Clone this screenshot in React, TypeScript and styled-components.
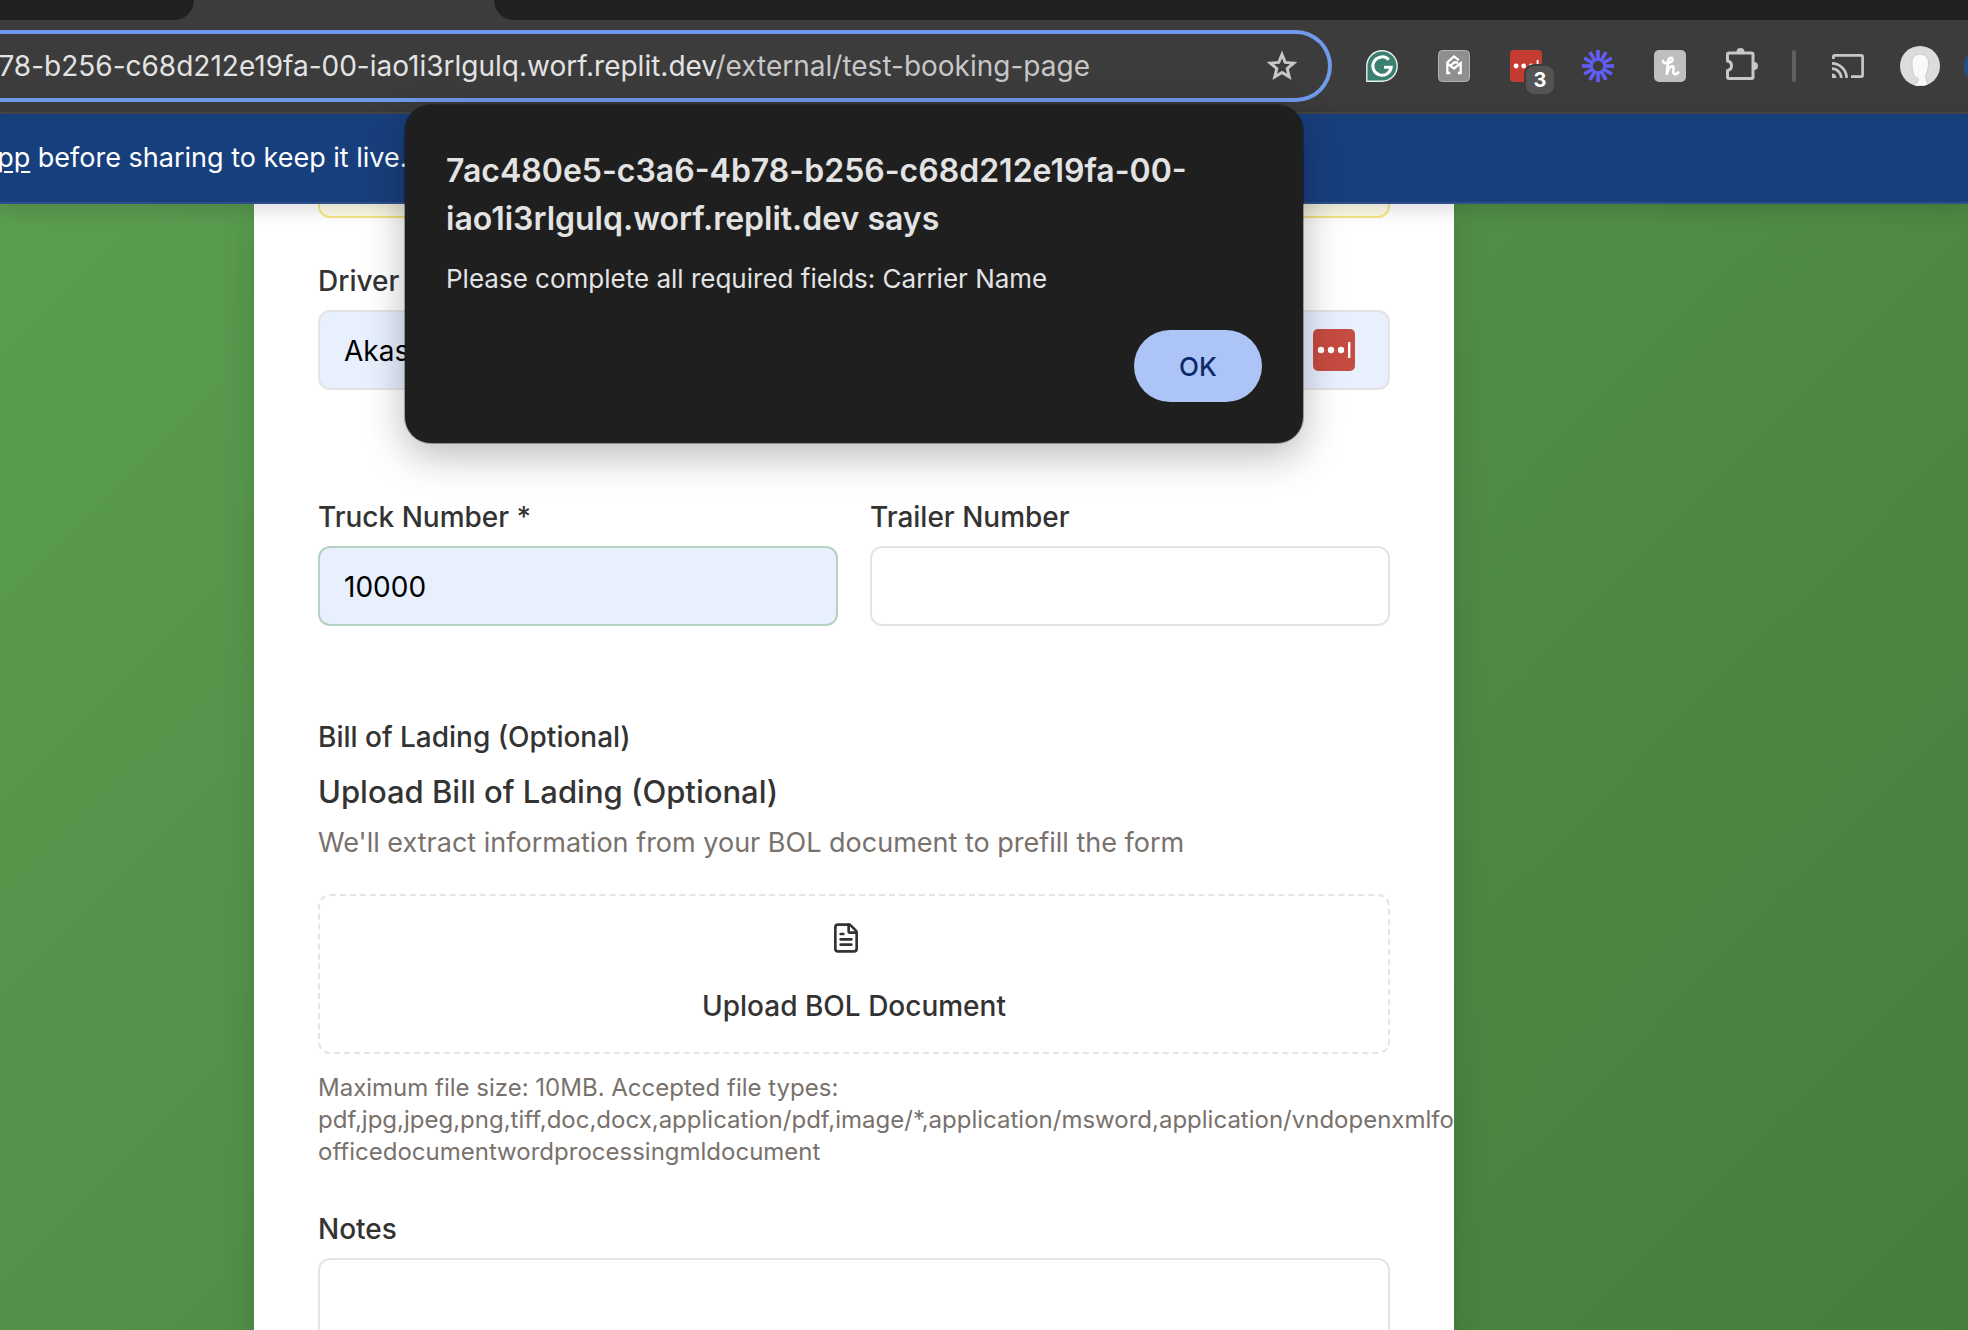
import React from 'react';
import styled, { createGlobalStyle } from 'styled-components';
import { FileText } from 'lucide-react';

const font = `Inter, Roboto, "Liberation Sans", sans-serif`;

const GlobalStyle = createGlobalStyle`
  *, *::before, *::after { box-sizing: border-box; }
  body { margin: 0; background: #3c3c3c; font-family: ${font}; }
  input, textarea, button { font-family: inherit; }
  p, h1, h2, h3 { margin: 0; }
`;

const Browser = styled.div`
  position: relative;
  display: flex;
  flex-direction: column;
  height: 100vh;
  overflow: hidden;
`;

const TabStrip = styled.div`
  display: flex;
  justify-content: space-between;
  flex: none;
  height: 20px;
  background: #3c3c3c;
`;

const InactiveTabs = styled.div<{ $side: 'left' | 'right' }>`
  background: #1f2120;
  ${({ $side }) =>
    $side === 'left'
      ? 'flex: none; width: 194px; border-bottom-right-radius: 20px;'
      : 'flex: 1; margin-left: 300px; border-bottom-left-radius: 20px;'}
`;

const Toolbar = styled.div`
  display: flex;
  align-items: center;
  flex: none;
  height: 94px;
  background: #3c3c3c;
  border-bottom: 2px solid #484848;
  overflow: hidden;
`;

const AddressBar = styled.div`
  display: flex;
  align-items: center;
  justify-content: flex-end;
  flex: 1;
  min-width: 0;
  height: 72px;
  padding-right: 30px;
  border: 4px solid #709bed;
  border-left: 0;
  border-radius: 0 36px 36px 0;
  overflow: hidden;
`;

const Url = styled.div`
  flex: none;
  margin-right: 176px;
  color: #e3e3e3;
  font-size: 28px;
  line-height: 40px;
  white-space: nowrap;
`;

const UrlPath = styled.span`
  color: #c7c7c7;
`;

const IconButton = styled.button`
  display: flex;
  align-items: center;
  justify-content: center;
  flex: none;
  width: 32px;
  height: 32px;
  padding: 0;
  border: 0;
  background: none;
  color: #c7c7c7;

  svg { display: block; overflow: visible; }
`;

const Extensions = styled.div`
  display: flex;
  align-items: center;
  flex: none;
  gap: 40px;
  padding-left: 34px;
`;

const Divider = styled.span`
  flex: none;
  width: 4px;
  height: 32px;
  margin: 0 -4px 0 -6px;
  border-radius: 2px;
  background: #5f5f5f;
`;

const Avatars = styled.div`
  display: flex;
  align-items: center;
  flex: none;
  gap: 24px;
  width: 68px;
  margin-left: -4px;
  overflow: hidden;
`;

const Avatar = styled.button`
  flex: none;
  width: 40px;
  height: 40px;
  padding: 0;
  border: 0;
  border-radius: 50%;
  background: #dcdcdc;
  overflow: hidden;

  svg { display: block; }
`;

const NextAvatar = styled(Avatar)`
  background: #205083;
`;

const BadgeHolder = styled.span`
  position: relative;
  display: flex;
`;

const Badge = styled.span`
  position: absolute;
  left: 16px;
  top: 16px;
  width: 28px;
  height: 28px;
  border-radius: 8px;
  background: #545454;
  box-shadow: 0 0 0 2px #3c3c3c;
  color: #ffffff;
  font-size: 20px;
  font-weight: 700;
  line-height: 28px;
  text-align: center;
`;

const Banner = styled.div`
  position: relative;
  flex: none;
  height: 90px;
  padding: 24px 0;
  border-bottom: 2px solid #2f4e8a;
  background: #183f7d;
  box-shadow: 0 4px 20px rgba(0, 0, 0, 0.16);
  color: #ffffff;
  font-size: 27px;
  line-height: 40px;
  white-space: nowrap;
`;

const BannerText = styled.p`
  margin-left: -18px;
`;

const BannerLink = styled.a`
  color: inherit;
  text-decoration: underline;
  text-underline-offset: 4px;
`;

const Page = styled.main`
  flex: 1;
  min-height: 0;
  padding-left: 254px;
  overflow: hidden;
  background: linear-gradient(135deg, #5a9d50 0%, #467e3c 100%);
`;

const Card = styled.form`
  max-width: 1200px;
  padding: 0 64px 64px;
  background: #ffffff;
  box-shadow: 0 8px 32px rgba(0, 0, 0, 0.12);
  overflow: hidden;
`;

const Notice = styled.div`
  height: 14px;
  margin-bottom: 48px;
  border: 2px solid #f6e683;
  border-top: 0;
  border-radius: 0 0 12px 12px;
  background: #fefce8;
`;

const Field = styled.div`
  display: flex;
  flex-direction: column;
  gap: 14px;
  min-width: 0;
`;

const FieldRow = styled.div`
  display: grid;
  grid-template-columns: 1fr 1fr;
  gap: 32px;
  margin: 112px 0 96px;
`;

const Label = styled.label`
  color: #333333;
  font-size: 28px;
  font-weight: 500;
  line-height: 30px;
`;

const Stack = styled.div`
  display: grid;
  align-items: center;

  > * { grid-area: 1 / 1; }
  > svg { justify-self: end; margin-right: 35px; }
`;

const TextInput = styled.input<{ $filled?: boolean; $valid?: boolean }>`
  width: 100%;
  height: 80px;
  padding: 2px 24px 0;
  border: 2px solid ${({ $valid }) => ($valid ? '#b5d1c0' : '#e5e4e3')};
  border-radius: 12px;
  background: ${({ $filled }) => ($filled ? '#e8effd' : '#ffffff')};
  color: #000000;
  font-size: 28px;
  line-height: 40px;
  outline: none;
`;

const TextArea = styled.textarea`
  display: block;
  width: 100%;
  height: 160px;
  padding: 16px 24px;
  border: 2px solid #e5e5e5;
  border-radius: 12px;
  background: #ffffff;
  font-size: 28px;
  line-height: 40px;
  resize: none;
  outline: none;
`;

const UploadTitle = styled.h3`
  margin: 2px 0 -7px;
  color: #333333;
  font-size: 31px;
  font-weight: 500;
  line-height: 48px;
`;

const UploadHint = styled.p`
  margin-bottom: 17px;
  color: #78716c;
  font-size: 27px;
  line-height: 40px;
`;

const UploadButton = styled.button`
  display: flex;
  flex-direction: column;
  align-items: center;
  gap: 32px;
  width: 100%;
  padding: 26px;
  border: 2px dashed #e5e5e5;
  border-radius: 12px;
  background: #ffffff;
  color: #333333;
  font-size: 28px;
  font-weight: 500;
  line-height: 40px;

  svg { margin-right: 16px; }
`;

const FileNote = styled.p`
  margin: 4px 0 46px;
  color: #78716c;
  font-size: 24px;
  line-height: 32px;
`;

const DialogLayer = styled.div`
  position: absolute;
  top: 105px;
  left: 254px;
  display: flex;
  justify-content: center;
  width: 1200px;
  pointer-events: none;
`;

const Dialog = styled.div`
  display: flex;
  flex-direction: column;
  width: 898px;
  padding: 42px 41px 41px;
  border-radius: 26px;
  background: #1f1f1f;
  box-shadow: 0 0 0 1px rgba(0, 0, 0, 0.3), 0 12px 40px rgba(0, 0, 0, 0.28);
  color: #e3e3e3;
  pointer-events: auto;
`;

const DialogTitle = styled.h2`
  font-size: 32px;
  font-weight: 600;
  line-height: 48px;
`;

const DialogMessage = styled.p`
  margin: 16px 0 31px;
  font-size: 26px;
  line-height: 40px;
`;

const OkButton = styled.button`
  align-self: flex-end;
  width: 128px;
  height: 72px;
  border: 0;
  border-radius: 36px;
  background: #adc5f6;
  color: #0c2a6b;
  font-size: 26px;
  font-weight: 500;
`;

const StarIcon = () => (
  <svg width="32" height="32" viewBox="0 0 32 32" fill="none" stroke="currentColor" strokeWidth="3">
    <path d="M16 4.5 19.2 12.4 27.6 13.1 21.2 18.6 23.2 26.9 16 22.5 8.8 26.9 10.8 18.6 4.4 13.1 12.8 12.4Z" />
  </svg>
);

const GrammarlyIcon = () => (
  <svg width="32" height="32" viewBox="0 0 32 32" fill="none">
    <path d="M.8 31.2V16A15.2 15.2 0 1 1 16 31.2Z" fill="#3a7f70" stroke="#e6efec" strokeWidth="1.4" />
    <path d="M22.800 9.800A9.200 9.200 0 1 0 25.200 17.200H18" stroke="#ffffff" strokeWidth="3" />
  </svg>
);

const MailTrackIcon = () => (
  <svg width="32" height="32" viewBox="0 0 32 32" fill="none">
    <rect x=".5" y=".5" width="31" height="31" rx="4" fill="#8f8f8f" stroke="#b4b4b4" />
    <path
      d="M20.800 10.200 16 6.400 9.300 12.500V23H12.200M9.300 13.500 16 18.500 22.700 13.200V23H19.800M12.800 15.500 16 12.500H20"
      stroke="#ffffff"
      strokeWidth="2.300"
    />
  </svg>
);

const PasswordIcon = ({ size, fill }: { size: number; fill: string }) => (
  <svg width={size} height={size} viewBox="0 0 42 42">
    <rect width="42" height="42" rx="5" fill={fill} />
    <circle cx="8" cy="21" r="3.200" fill="#ffffff" />
    <circle cx="18" cy="21" r="3.200" fill="#ffffff" />
    <circle cx="28" cy="21" r="3.200" fill="#ffffff" />
    <rect x="35" y="13" width="2.400" height="16" fill="#ffffff" />
  </svg>
);

const LoomIcon = () => (
  <svg width="32" height="32" viewBox="-16 -16 32 32" stroke="#625df5" fill="none">
    <circle r="6.500" strokeWidth="2.600" />
    {Array.from({ length: 12 }, (_, i) => (
      <path key={i} d="M0-6.500V-16" strokeWidth="3.600" transform={`rotate(${i * 30})`} />
    ))}
  </svg>
);

const HoneyIcon = () => (
  <svg width="32" height="32" viewBox="0 0 32 32" fill="none">
    <rect width="32" height="32" rx="5" fill="#bfbfbf" />
    <path
      d="M9 11C10 15 19.500 13 18.500 9C17.500 6.500 14.500 8 14.200 11L12.800 24C14 19 16.500 16 18.500 16.300C21 17 18 22 19.800 23.600C21.200 24.600 23.200 23.800 24.400 22.400"
      stroke="#ffffff"
      strokeWidth="2.600"
      strokeLinecap="round"
      strokeLinejoin="round"
    />
  </svg>
);

const PuzzleIcon = () => (
  <svg width="32" height="32" viewBox="0 0 32 32" fill="none">
    <path
      d="M1.500 11V4.500Q1.500 3 3 3H25.500Q27 3 27 4.500V27Q27 28.500 25.500 28.500H3Q1.500 28.500 1.500 27V20.500C6.800 19.500 6.800 12 1.500 11Z"
      stroke="currentColor"
      strokeWidth="3"
      strokeLinejoin="round"
    />
    <path d="M10.500 2A4 4 0 0 1 18.500 2ZM28 12A4 4 0 0 1 28 20Z" fill="currentColor" />
  </svg>
);

const CastIcon = () => (
  <svg width="32" height="32" viewBox="0 0 32 32" fill="none" stroke="currentColor" strokeWidth="2.700">
    <path d="M1.400 9V6.800Q1.400 5.400 2.800 5.400H29.200Q30.600 5.400 30.600 6.800V25.200Q30.600 26.600 29.200 26.600H19" />
    <path d="M0 13.400A14.600 14.600 0 0 1 14.600 28M0 18.700A9.300 9.300 0 0 1 9.300 28" />
    <path d="M0 28V23.500A4.500 4.500 0 0 1 4.500 28Z" fill="currentColor" stroke="none" />
  </svg>
);

const PortraitIcon = () => (
  <svg width="40" height="40" viewBox="0 0 40 40">
    <path
      d="M12 17C11 5 29 5 28.500 17C28.500 25 26 27 25.500 31L28 40H13Q19 37 18 32C13 32 12 24 12 17Z"
      fill="#f7f9fb"
      stroke="#c3ccd3"
    />
  </svg>
);

export default function App() {
  return (
    <Browser>
      <GlobalStyle />
      <TabStrip>
        <InactiveTabs $side="left" />
        <InactiveTabs $side="right" />
      </TabStrip>
      <Toolbar>
        <AddressBar>
          <Url>
            78-b256-c68d212e19fa-00-iao1i3rlgulq.worf.replit.dev<UrlPath>/external/test-booking-page</UrlPath>
          </Url>
          <IconButton aria-label="Bookmark this page">
            <StarIcon />
          </IconButton>
        </AddressBar>
        <Extensions>
          <IconButton aria-label="Grammarly"><GrammarlyIcon /></IconButton>
          <IconButton aria-label="Mail tracker"><MailTrackIcon /></IconButton>
          <IconButton aria-label="Password manager">
            <BadgeHolder>
              <PasswordIcon size={32} fill="#c43c31" />
              <Badge>3</Badge>
            </BadgeHolder>
          </IconButton>
          <IconButton aria-label="Loom"><LoomIcon /></IconButton>
          <IconButton aria-label="Honey"><HoneyIcon /></IconButton>
          <IconButton aria-label="Extensions"><PuzzleIcon /></IconButton>
          <Divider />
          <IconButton aria-label="Cast"><CastIcon /></IconButton>
          <Avatars>
            <Avatar aria-label="Profile"><PortraitIcon /></Avatar>
            <NextAvatar aria-label="Account" />
          </Avatars>
        </Extensions>
      </Toolbar>
      <Banner>
        <BannerText>
          <BannerLink href="#">app</BannerLink> before sharing to keep it live.
        </BannerText>
      </Banner>
      <Page>
        <Card>
          <Notice />
          <Field>
            <Label htmlFor="driver">Driver</Label>
            <Stack>
              <TextInput id="driver" defaultValue="Akash" $filled />
              <PasswordIcon size={42} fill="#c64b40" />
            </Stack>
          </Field>
          <FieldRow>
            <Field>
              <Label htmlFor="truck">Truck Number *</Label>
              <TextInput id="truck" defaultValue="10000" $filled $valid />
            </Field>
            <Field>
              <Label htmlFor="trailer">Trailer Number</Label>
              <TextInput id="trailer" />
            </Field>
          </FieldRow>
          <Field>
            <Label htmlFor="bol">Bill of Lading (Optional)</Label>
            <UploadTitle>Upload Bill of Lading (Optional)</UploadTitle>
            <UploadHint>We'll extract information from your BOL document to prefill the form</UploadHint>
            <UploadButton id="bol" type="button">
              <FileText size={32} />
              Upload BOL Document
            </UploadButton>
            <FileNote>
              Maximum file size: 10MB. Accepted file types:
              <br />
              pdf,jpg,jpeg,png,tiff,doc,docx,application/pdf,image/*,application/msword,application/vndopenxmlformats-
              officedocumentwordprocessingmldocument
            </FileNote>
          </Field>
          <Field>
            <Label htmlFor="notes">Notes</Label>
            <TextArea id="notes" />
          </Field>
        </Card>
      </Page>
      <DialogLayer>
        <Dialog role="alertdialog" aria-labelledby="alert-title" aria-describedby="alert-message">
          <DialogTitle id="alert-title">
            7ac480e5-c3a6-4b78-b256-c68d212e19fa-00-
            <br />
            iao1i3rlgulq.worf.replit.dev says
          </DialogTitle>
          <DialogMessage id="alert-message">Please complete all required fields: Carrier Name</DialogMessage>
          <OkButton type="button">OK</OkButton>
        </Dialog>
      </DialogLayer>
    </Browser>
  );
}
